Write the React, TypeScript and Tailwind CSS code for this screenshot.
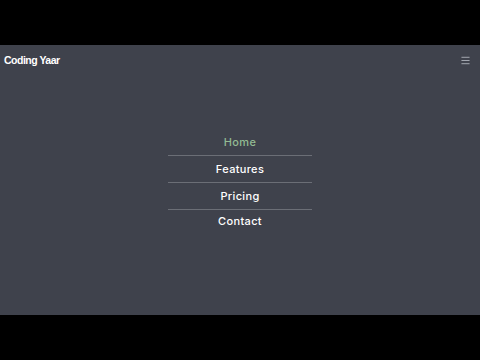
import { Menu } from "lucide-react";

const links = ["Home", "Features", "Pricing", "Contact"];

export default function App() {
  return (
    <div className="w-[480px] h-[360px] bg-black flex flex-col font-['Inter',sans-serif]">
      <div className="h-[45px]" />
      <section className="h-[270px] bg-[#3f424c] flex flex-col">
        <header className="h-[30px] pt-[1px] flex items-center justify-between pl-[4px] pr-[9px]">
          <span className="text-white font-bold text-[10.5px] tracking-[-0.5px] font-['Liberation_Sans',sans-serif]">
            Coding Yaar
          </span>
          <Menu className="w-[11px] h-[11px] text-gray-300" strokeWidth={1.5} />
        </header>
        <nav className="flex justify-center mt-[54px]">
          <ul className="w-[144px] flex flex-col">
            {links.map((link, i) => (
              <li
                key={link}
                className={
                  i < links.length - 1
                    ? "h-[27px] pt-[1px] flex items-center justify-center border-b border-[#6b6e76]"
                    : "h-[22px] flex items-center justify-center"
                }
              >
                <a
                  className={
                    "text-[11px] font-medium tracking-[0.03em] " +
                    (i === 0 ? "text-[#93bb93]" : "text-white")
                  }
                >
                  {link}
                </a>
              </li>
            ))}
          </ul>
        </nav>
      </section>
      <div className="h-[45px]" />
    </div>
  );
}
